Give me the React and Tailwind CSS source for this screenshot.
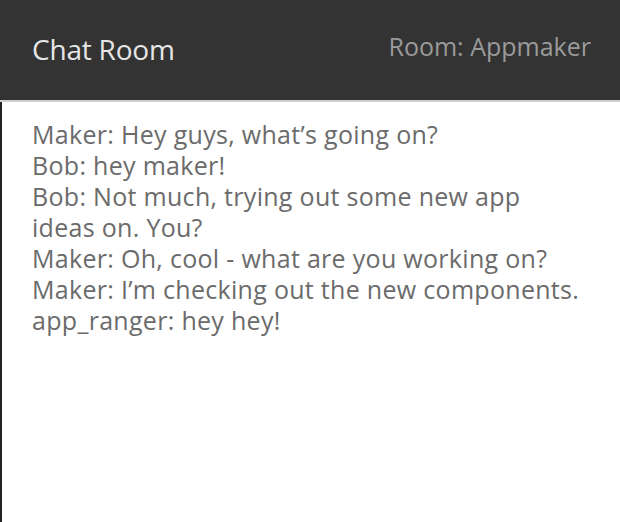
import React from 'react';

const messages = [
  { user: 'Maker', text: 'Hey guys, what’s going on?' },
  { user: 'Bob', text: 'hey maker!' },
  { user: 'Bob', text: 'Not much, trying out some new app ideas on. You?' },
  { user: 'Maker', text: 'Oh, cool - what are you working on?' },
  { user: 'Maker', text: 'I’m checking out the new components.' },
  { user: 'app_ranger', text: 'hey hey!' },
];

const App = () => {
  return (
    <div className="w-[620px] h-[522px] flex flex-col bg-white font-['Open_Sans',sans-serif]">
      <header className="h-[102px] shrink-0 flex items-center justify-between bg-[#333333] border-b-2 border-[#cfcfcf] pl-[32px] pr-[29px] pb-[2px]">
        <h1 className="text-[28px] text-[#e6e6e6] tracking-[-0.2px]">Chat Room</h1>
        <span className="text-[25px] text-[#9a9a9a] -mt-[4px]">Room: Appmaker</span>
      </header>
      <main className="flex-1 border-l-2 border-[#222222] pl-[30px] pr-[38px] pt-[17px]">
        {messages.map((m, i) => (
          <p key={i} className="text-[25px] leading-[31px] text-[#6b6b6b] tracking-[0.3px]">
            {m.user}: {m.text}
          </p>
        ))}
      </main>
    </div>
  );
};

export default App;
